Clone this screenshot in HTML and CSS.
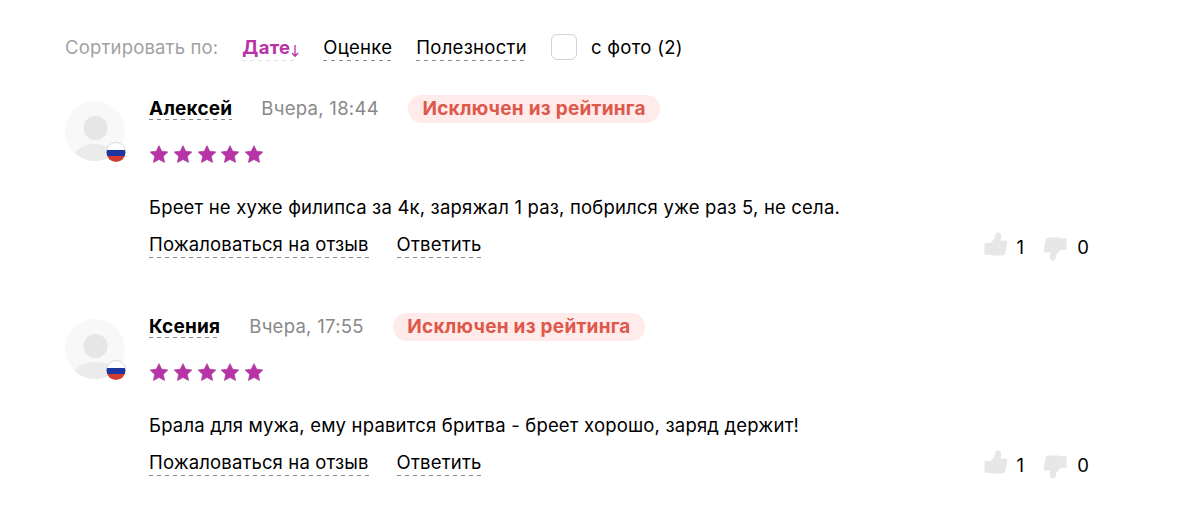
FILE: index.html
```
<!DOCTYPE html>
<html lang="ru">
<head>
<meta charset="utf-8">
<title>Отзывы</title>
<link rel="stylesheet" href="styles.css">
</head>
<body>
<svg class="symbols" aria-hidden="true">
  <defs>
    <linearGradient id="flag" x1="0" y1="0" x2="0" y2="1">
      <stop offset="0.36" stop-color="#fff"/><stop offset="0.36" stop-color="#1c35a0"/>
      <stop offset="0.67" stop-color="#1c35a0"/><stop offset="0.67" stop-color="#d23b30"/>
    </linearGradient>
    <clipPath id="round"><circle cx="30" cy="30" r="30"/></clipPath>
    <symbol id="avatar" viewBox="0 0 62 62">
      <circle cx="30" cy="30" r="30" fill="#f8f8f8"/>
      <circle cx="30.500" cy="27" r="12" fill="#e6e6e6"/>
      <ellipse cx="30" cy="56" rx="21" ry="13" fill="#ebebeb" clip-path="url(#round)"/>
      <circle cx="51" cy="51.500" r="9.500" fill="url(#flag)"/>
      <path d="M41.700 49a9.500 9.500 0 0 1 18.600 0" fill="none" stroke="#d0d0e0" stroke-width=".8"/>
    </symbol>
    <symbol id="star" viewBox="0 0 20 20">
      <path d="M10 1.700l2.700 5.500 6.100.8-4.500 4.300 1.200 6.100-5.500-3-5.500 3 1.200-6.100-4.500-4.300 6.100-.8z" fill="#b833a8" stroke="#a8439c" stroke-width=".8" stroke-linejoin="round"/>
    </symbol>
    <symbol id="thumb" viewBox="0 0 24 26">
      <path d="M1.500 11h3.800c.9 0 1.500-.2 2.100-.8L10 7.300c.6-.7.800-1.600.9-3.200.1-2.200 1.400-3.600 3.200-3.600 1.900 0 3.100 1.400 3.100 3.500 0 1.800-.5 3.100-.9 4.600h5.100c1.400 0 2.200 1 1.900 2.300l-2 9.800c-.4 2-1.600 2.900-3.500 2.900H8.600l-2.700-.9H1.500c-.7 0-1-.3-1-1V12c0-.7.300-1 1-1z" fill="#e7e7e7"/>
    </symbol>
  </defs>
</svg>
<main class="reviews">
  <div class="sort">
    <span class="sort-label">Сортировать по:</span>
    <span class="sort-link active">Дате<svg class="arrow" viewBox="0 0 8 14"><path d="M4 1v11M1 9l3 3.300L7 9" fill="none" stroke="currentColor" stroke-width="1.300"/></svg></span>
    <span class="sort-link">Оценке</span>
    <span class="sort-link">Полезности</span>
    <label class="photo"><span class="box"></span>с фото (2)</label>
  </div>

  <article class="review">
    <svg class="avatar"><use href="#avatar"/></svg>
    <div class="content">
      <div class="head"><span class="name">Алексей</span><span class="date">Вчера, 18:44</span><span class="tag">Исключен из рейтинга</span></div>
      <div class="stars"><svg><use href="#star"/></svg><svg><use href="#star"/></svg><svg><use href="#star"/></svg><svg><use href="#star"/></svg><svg><use href="#star"/></svg></div>
      <p class="text">Бреет не хуже филипса за 4к, заряжал 1 раз, побрился уже раз 5, не села.</p>
      <div class="actions"><span class="action">Пожаловаться на отзыв</span><span class="action reply">Ответить</span>
        <div class="votes"><svg class="up"><use href="#thumb"/></svg><span class="count">1</span><svg class="down"><use href="#thumb"/></svg><span class="count">0</span></div></div>
    </div>
  </article>

  <article class="review">
    <svg class="avatar"><use href="#avatar"/></svg>
    <div class="content">
      <div class="head"><span class="name">Ксения</span><span class="date">Вчера, 17:55</span><span class="tag">Исключен из рейтинга</span></div>
      <div class="stars"><svg><use href="#star"/></svg><svg><use href="#star"/></svg><svg><use href="#star"/></svg><svg><use href="#star"/></svg><svg><use href="#star"/></svg></div>
      <p class="text">Брала для мужа, ему нравится бритва - бреет хорошо, заряд держит!</p>
      <div class="actions"><span class="action">Пожаловаться на отзыв</span><span class="action reply">Ответить</span>
        <div class="votes"><svg class="up"><use href="#thumb"/></svg><span class="count">1</span><svg class="down"><use href="#thumb"/></svg><span class="count">0</span></div></div>
    </div>
  </article>
</main>
</body>
</html>
```
FILE: styles.css
```
* { box-sizing: border-box; }
body { margin: 0; background: #fff; color: #000; font: 400 18.5px/24px Inter, sans-serif; letter-spacing: .13px; white-space: nowrap; }
.symbols { position: absolute; width: 0; height: 0; }
.reviews { width: 1024px; margin-left: 65px; padding-top: 33px; }
.sort { display: flex; height: 28px; letter-spacing: .28px; }
.sort-label { color: #a2a2a2; padding-top: 2px; margin-right: 24px; letter-spacing: .17px; }
.sort-link, .name, .action { background: repeating-linear-gradient(90deg, #8a8a8a 0 4.500px, transparent 4.500px 8px) left bottom / 100% 1.500px no-repeat; }
.sort-link { height: 28px; padding-top: 2px; margin-right: 24px; }
.active { color: #b833a5; font-weight: 700; background-image: repeating-linear-gradient(90deg, #e3e3e3 0 4.500px, transparent 4.500px 8px); }
.arrow { width: 8px; height: 14px; margin-left: 1px; vertical-align: -4px; }
.photo { display: flex; align-items: center; height: 28px; gap: 14px; }
.box { width: 26px; height: 26px; border: 1.500px solid #d3d3d3; border-radius: 6px; }
.review { display: flex; height: 218px; padding-top: 33px; }
.avatar { width: 62px; height: 62px; margin-top: 7px; flex: none; }
.content { width: 940px; margin-left: 22px; }
.head { display: flex; height: 30px; }
.name { height: 26px; padding-top: 3px; font-size: 19px; font-weight: 700; margin-right: 29px; letter-spacing: .2px; }
.date { padding-top: 2px; color: #898989; margin-right: 29px; letter-spacing: .28px; }
.tag { height: 28px; padding: 2px 14.500px; margin-top: 1px; border-radius: 14px; background: #ffebe9; color: #de584c; font-size: 19px; font-weight: 700; letter-spacing: .26px; }
.stars { display: flex; gap: 3.800px; margin-top: 20px; }
.stars svg { width: 20px; height: 20px; }
.text { margin: 31px 0 0; letter-spacing: .18px; }
.actions { display: flex; margin-top: 13px; }
.action { height: 26px; margin-right: 28px; letter-spacing: .13px; }
.reply { letter-spacing: .22px; }
.votes { display: flex; align-items: center; margin-left: auto; height: 29px; }
.up, .down { width: 24px; height: 26px; margin-top: -3px; }
.up { margin-right: 9px; }
.down { margin: 3px 10px 0 19px; transform: rotate(180deg); }
```
